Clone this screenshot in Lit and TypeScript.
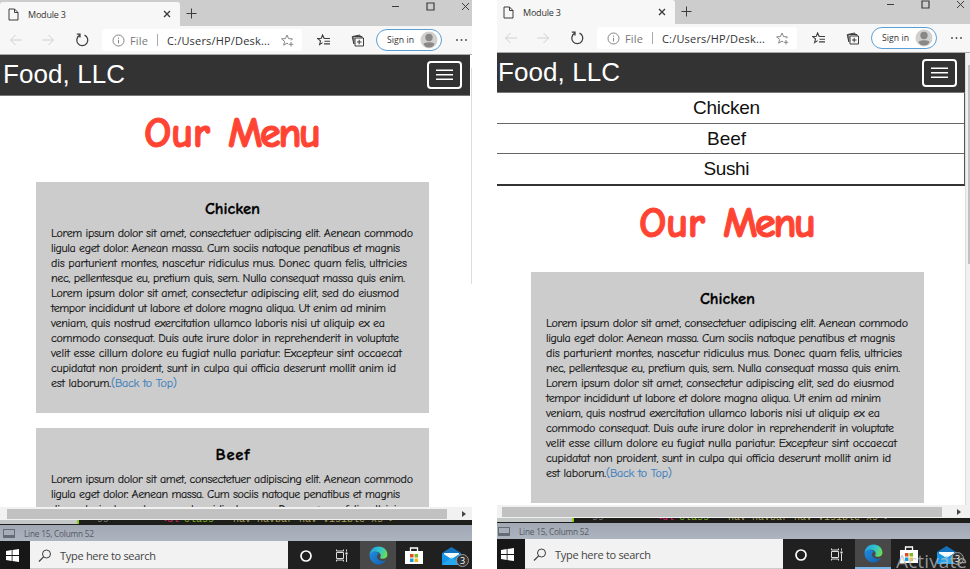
import { LitElement, html, css, svg, nothing } from "lit";
import { customElement, property, query, state } from "lit/decorators.js";
import { styleMap } from "lit/directives/style-map.js";

/** Text spread over a fixed number of pixels by letter-spacing. */
@customElement("fit-text")
class FitText extends LitElement {
  @property() text = "";
  @property({ type: Number }) w = 0;
  @state() private spacing = 0;
  @query("span") private inner!: HTMLElement;
  static styles = css`
    :host { display: block; white-space: nowrap; flex: none; }
    span { display: inline-block; white-space: pre; }
  `;
  firstUpdated() {
    const natural = this.inner.getBoundingClientRect().width;
    this.spacing = (this.w - natural) / Math.max(1, this.text.length - 1);
  }
  render() {
    return html`<div style=${styleMap({ width: this.w + "px" })}><span style=${styleMap({ letterSpacing: this.spacing + "px" })}>${this.text}</span></div>`;
  }
}

const fit = (text: string, w: number, cls = "") => html`<fit-text class=${cls} .text=${text} .w=${w}></fit-text>`;

const LINES: [string, number][] = [
  ["Lorem ipsum dolor sit amet, consectetuer adipiscing elit. Aenean commodo", 362],
  ["ligula eget dolor. Aenean massa. Cum sociis natoque penatibus et magnis", 349],
  ["dis parturient montes, nascetur ridiculus mus. Donec quam felis, ultricies", 356],
  ["nec, pellentesque eu, pretium quis, sem. Nulla consequat massa quis enim.", 354],
  ["Lorem ipsum dolor sit amet, consectetur adipiscing elit, sed do eiusmod", 348],
  ["tempor incididunt ut labore et dolore magna aliqua. Ut enim ad minim", 335],
  ["veniam, quis nostrud exercitation ullamco laboris nisi ut aliquip ex ea", 334],
  ["commodo consequat. Duis aute irure dolor in reprehenderit in voluptate", 348],
  ["velit esse cillum dolore eu fugiat nulla pariatur. Excepteur sint occaecat", 351],
  ["cupidatat non proident, sunt in culpa qui officia deserunt mollit anim id", 345],
];

const ic = (w: number, h: number, body: unknown, cls = "") =>
  html`<svg class="ic ${cls}" width=${w} height=${h} viewBox="0 0 ${w} ${h}">${body}</svg>`;

const icons = {
  page: ic(11, 13, svg`<path d="M1 1h5.5L10 4.5V12H1zM6.5 1v3.500H10"/>`),
  x: ic(8, 8, svg`<path d="M1 1l6 6M7 1l-6 6" stroke-width="1.400"/>`),
  plus: ic(11, 11, svg`<path d="M5.500 .5v10M.5 5.500h10"/>`),
  back: ic(14, 12, svg`<path d="M13 6H1.500M6.500 1l-5 5 5 5"/>`, "pale"),
  fwd: ic(14, 12, svg`<path d="M1 6h11.500M7.500 1l5 5-5 5"/>`, "pale"),
  reload: ic(14, 14, svg`<path d="M4.500 2.400A5.500 5.500 0 1 0 9.500 2.100M1.800 1.200H5v3.300" stroke-width="1.250"/>`),
  info: ic(13, 13, svg`<circle cx="6.500" cy="6.500" r="5.500"/><path d="M6.500 5.800v3.600M6.500 3.600v1.200"/>`, "grey"),
  star: ic(13, 13, svg`<path d="M10.200 6.400L11.400 4.900 7.600 4.600 6 1 4.400 4.600.6 4.900l3 2.500-.9 3.800L6 9.100l1.200.8M10 8v4.500M7.800 10.300h4.400"/>`, "grey"),
  fav: ic(14, 13, svg`<path d="M8 4.400L7 4.300 5.600 1 4.300 4.300.8 4.600l2.700 2.300-.9 3.700 3-2M7 4.500h6M7.500 7.200H13M7 9.900h6" stroke-width="1.100"/>`),
  coll: ic(14, 13, svg`<path d="M4 4h8.500v8H4zM8.200 5.800v4.500M6 8h4.500M2.800 9.800L1.200 2.600 8.800 1l.5 2.300M2.800 9.800V2.500H11V4"/>`),
  min: ic(9, 9, svg`<path d="M1 4.500h7"/>`),
  max: ic(9, 9, svg`<path d="M1 1h7v7H1z" stroke-width="1.200"/>`),
  close: ic(9, 9, svg`<path d="M1 1l7 7M8 1L1 8"/>`),
  burger: ic(17, 12, svg`<path d="M0 1.250h17M0 5.750h17M0 10.250h17" stroke="#fff" stroke-width="1.500"/>`),
  person: ic(18, 18, svg`<circle cx="9" cy="9" r="8.500" fill="#d2d0ce" stroke="none"/><circle cx="9" cy="6.500" r="3.700" fill="#8a8886" stroke="none"/><path d="M3.500 12.500Q9 10 14.500 12.500Q13.500 16.500 9 16.500T3.500 12.500z" fill="#8a8886" stroke="none"/>`),
  dots: ic(13, 4, svg`<g fill="#444" stroke="none"><circle cx="2" cy="2" r=".9"/><circle cx="6.500" cy="2" r=".9"/><circle cx="11" cy="2" r=".9"/></g>`),
  win: ic(13, 13, svg`<path fill="#fff" stroke="none" d="M0 1.900L5.700 1.100V6H0zM6.500 1L13 0v6H6.500zM0 6.900h5.700v5L0 11.100zM6.500 6.900H13V13l-6.500-.9z"/>`),
  search: ic(14, 13, svg`<circle cx="8.500" cy="5" r="4"/><path d="M5.600 7.900L1 12.500" stroke-width="1.200"/>`),
  cortana: ic(14, 14, svg`<circle cx="7" cy="7" r="5" stroke="#fff" stroke-width="1.700"/>`),
  task: ic(14, 13, svg`<path stroke="#ddd" d="M1.500 3.500h7v6h-7zM1.500 .5v1.500h7V.5M1.500 12.500V11h7v1.500M11.500 .5v2M11.500 6v7"/><path stroke="#fff" stroke-width="2" d="M10.500 4.500h2"/>`),
  edge: html`<svg width="19" height="19" viewBox="0 0 20 20">
    <defs>
      <linearGradient id="a" x1="0" y1=".2" x2="1" y2=".5"><stop offset="0" stop-color="#249ee0"/><stop offset=".55" stop-color="#2ec4cf"/><stop offset="1" stop-color="#6bdc55"/></linearGradient>
      <linearGradient id="b" x1="0" y1="0" x2="1" y2="1"><stop offset="0" stop-color="#1c8be0"/><stop offset="1" stop-color="#1660ad"/></linearGradient>
    </defs>
    <path fill="url(#b)" d="M.8 8.500C2 5.500 8 4.600 10.500 8.500 8 9 7.500 12.200 10 14.300c2.400 2 5.600 1.600 7.800.4C15.500 19.500 9 21 4.500 17.500 1 14.800.2 11.500.8 8.500z"/>
    <path fill="url(#a)" d="M.7 9.300C1 4 5 .6 10 .6c6 0 9.400 4.300 9.400 8.300 0 3-2.200 4.600-4.700 4.600-2 0-3.500-.8-3-1.600.8-1.200.9-2.600-.2-4C9 5 3.200 5 .7 9.300z"/>
  </svg>`,
  store: html`<svg width="18" height="19" viewBox="0 0 18 19"><path d="M5.500 5V2h7v3" fill="none" stroke="#fff" stroke-width="1.300"/><path fill="#fff" d="M0 5h18v13H0z"/><path fill="#e64a20" d="M5 8h3.500v3.500H5z"/><path fill="#7cb920" d="M9.500 8H13v3.500H9.500z"/><path fill="#149fe0" d="M5 12.500h3.500V16H5z"/><path fill="#f6b71b" d="M9.500 12.500H13V16H9.500z"/></svg>`,
  mail: html`<svg width="19" height="18" viewBox="0 0 19 18"><path fill="#1272bd" d="M0 6l9.500-6L19 6v3H0z"/><path fill="#f5fafd" d="M2 6h15v5l-7.500 4L2 10z"/><path fill="#1595e5" d="M0 6l9.500 6L19 6v12H0z"/><path fill="#35b4f4" d="M0 18L9.500 10 19 18z" opacity=".6"/></svg>`,
};

@customElement("browser-window")
class BrowserWindow extends LitElement {
  @property({ type: Boolean, reflect: true }) open = false;
  static styles = css`
    :host { display: flex; flex-direction: column; height: 569px; width: 472px; background: #fff; font-family: "Open Sans", "Segoe UI", sans-serif; color: #333; overflow: hidden; }
    :host([open]) { width: 475px; height: 571px; }
    * { box-sizing: border-box; }
    svg { display: block; flex: none; }
    .ic { fill: none; stroke: #3c3c3c; stroke-width: 1; }
    .pale { stroke: #d0d0d0; }
    .grey { stroke: #858585; }
    .tabs { height: 26px; flex: none; background: #cdcdcd; display: flex; align-items: flex-start; padding-top: 2px; }
    .tab { width: 180px; height: 24px; background: #f7f7f7; border-radius: 3px 3px 0 0; display: flex; align-items: center; padding: 0 9px 0 8px; font-size: 9px; }
    .tab fit-text { margin-left: 9px; flex: 1; }
    .tabs > .new { margin: 6px 0 0 6px; }
    .controls { display: flex; margin-left: auto; width: 81px; justify-content: space-between; padding-right: 2px; }
    :host([open]) .controls { margin-right: 3px; }
    .bar { height: 28px; flex: none; background: #f7f7f7; display: flex; align-items: center; padding-left: 9px; }
    .bar > .i2 { margin-left: 18px; }
    .bar > .i3 { margin-left: 20px; }
    .address { margin-left: 13px; width: 200px; height: 22px; background: #fff; border-radius: 3px; display: flex; align-items: center; padding-left: 10px; font-size: 11px; }
    .file { color: #777; margin-left: 5px; }
    .sep { width: 1px; height: 12px; background: #aaa; margin: 0 9px; }
    .address .ic:last-child { margin-left: 11px; }
    .gapfav { margin-left: 15px; }
    .gapcoll { margin-left: 20px; }
    .sign { width: 66px; height: 22px; border: 1.5px solid #5a9fd6; border-radius: 11px; margin-left: 11px; display: flex; align-items: center; padding-left: 10px; font-size: 8.7px; background: #fff; }
    .sign svg { margin-left: 6px; }
    .gapdots { margin-left: 13px; }
    .page { height: 453px; flex: none; display: flex; border-top: 1px solid #aaa; }
    .site { width: 470px; flex: none; overflow: hidden; }
    .track { flex: 1; padding: 13px 0 0 1px; background: #fff; }
    .thumb { height: 216px; background: #ddd; width: 1px; }
    :host([open]) .track { background: #f1f1f1; padding: 0 0 0 2px; border-left: 1px solid #ddd; }
    :host([open]) .thumb { width: 3px; height: 199px; margin-top: 12px; background: #c1c1c1; }
    .nav { height: 41px; background: #333; border-bottom: 1px solid #777; display: flex; align-items: center; justify-content: space-between; padding: 0 8px 0 3px; color: #fff; font: 26px/38px "Liberation Sans", Arial, sans-serif; }
    .nav > fit-text { margin-top: -2px; }
    :host([open]) .nav { height: 40px; }
    .burger { width: 35px; height: 28px; border: 2px solid #fff; border-radius: 4px; display: grid; place-items: center; }
    .menu { border-right: 1px solid #555; border-bottom: 2px solid #333; height: 93px; display: grid; grid-template-rows: 31px 30px 30px; }
    .menu div { border-bottom: 1px solid #666; display: flex; justify-content: center; padding-right: 6px; font: 19px/30px "Liberation Sans", Arial, sans-serif; color: #111; }
    .menu div:last-child { border-bottom: 0; }
    .body { padding: 0 41px 0 36px; font-family: "Comic Sans MS", "Comic Neue", sans-serif; }
    h1 { margin: 0; height: 86px; padding-top: 9px; display: flex; justify-content: center; gap: 18px; font-size: 43px; line-height: 56px; font-weight: 700; color: #ff4433; -webkit-text-stroke: 1px #ff4433; }
    .card { height: 231px; background: #ccc; margin-bottom: 15px; padding: 17px 15px 0; font-size: 12px; line-height: 15px; color: #111; -webkit-text-stroke: 0.15px currentColor; }
    h2 { margin: 0 0 7px; font-size: 16.5px; line-height: 20px; display: flex; justify-content: center; color: #000; -webkit-text-stroke: 0.3px #000; }
    .last { display: flex; }
    .link { color: #3c7fbd; }
    .hscroll { height: 13px; flex: none; background: #f1f1f1; display: flex; align-items: center; padding-left: 7px; }
    .hthumb { width: 440px; height: 10px; background: #c1c1c1; }
    .arrow { border: 3px solid transparent; border-left: 4px solid #444; border-right: 0; margin-left: 15px; }
    .code { height: 5px; flex: none; display: flex; background: #1d1e19; font: 10px/10px "Liberation Mono", monospace; overflow: hidden; }
    .panel { width: 79px; height: 4px; background: #c3c7c7; border-right: 2px solid #8ccc11; flex: none; }
    .code span { margin-top: -5px; white-space: pre; }
    .num { color: #777; margin-left: 12px; width: 70px; }
    .tag { color: #d0205c; width: 23px; }
    .attr { color: #80b020; width: 43px; }
    .str { color: #a59d55; }
    .status { height: 16px; flex: none; background: linear-gradient(#a2a8b3, #acb4c0); display: flex; align-items: center; padding-left: 3px; gap: 9px; font-size: 8.3px; color: #555b64; }
    .status i { width: 12px; height: 9px; border: 1px solid #666c75; border-bottom-width: 3px; }
    .task { flex: 1; background: #202020; display: flex; }
    .start { width: 30px; background: #171717; display: grid; place-items: center; padding-right: 6px; }
    .search { width: 258px; background: #f2f2f2; display: flex; align-items: center; padding: 2px 0 0 8px; gap: 8px; font-size: 11px; color: #444; border-bottom: 1px solid #ccc; }
    .slot { width: 36px; display: grid; place-items: center; padding-top: 1px; }
    .slot.on { background: #484848; }
    :host([open]) .on { border-bottom: 2px solid #76b9ed; }
    .mail { position: relative; width: 38px; }
    .badge { position: absolute; left: 24px; top: 13px; width: 13px; height: 13px; border-radius: 50%; border: 1px solid #999; background: #333; color: #fff; font-size: 9px; line-height: 11px; text-align: center; }
  `;
  render() {
    return html`
      <div class="tabs">
        <div class="tab">${icons.page}${fit("Module 3", 38)}${icons.x}</div>
        <div class="new">${icons.plus}</div>
        <div class="controls">${icons.min}${icons.max}${icons.close}</div>
      </div>
      <div class="bar">
        ${icons.back}<div class="i2">${icons.fwd}</div><div class="i3">${icons.reload}</div>
        <div class="address">${icons.info}${fit("File", 18, "file")}<div class="sep"></div>${fit("C:/Users/HP/Desk...", 103)}${icons.star}</div>
        <div class="gapfav">${icons.fav}</div><div class="gapcoll">${icons.coll}</div>
        <div class="sign">${fit("Sign in", 27)}${icons.person}</div>
        <div class="gapdots">${icons.dots}</div>
      </div>
      <div class="page">
        <div class="site">
          <div class="nav">${fit("Food, LLC", 122)}<div class="burger">${icons.burger}</div></div>
          ${this.open ? html`<div class="menu"><div>${fit("Chicken", 67)}</div><div>${fit("Beef", 39)}</div><div>${fit("Sushi", 46)}</div></div>` : nothing}
          <div class="body">
            <h1>${fit("Our", 66)}${fit("Menu", 93)}</h1>
            ${this.card("Chicken", 55)}${this.card("Beef", 34)}
          </div>
        </div>
        <div class="track"><div class="thumb"></div></div>
      </div>
      <div class="hscroll"><div class="hthumb"></div><div class="arrow"></div></div>
      <div class="code"><div class="panel"></div><span class="num"> 99</span><span class="tag">&lt;ul</span><span class="attr">class=</span><span class="str">"nav navbar-nav visible-xs"&gt;</span></div>
      <div class="status"><i></i>${fit("Line 15, Column 52", 70)}</div>
      <div class="task">
        <div class="start">${icons.win}</div>
        <div class="search">${icons.search}${fit("Type here to search", 96)}</div>
        <div class="slot">${icons.cortana}</div><div class="slot">${icons.task}</div>
        <div class="slot on">${icons.edge}</div><div class="slot">${icons.store}</div>
        <div class="slot mail">${icons.mail}<div class="badge">3</div></div>
      </div>
    `;
  }
  private card(title: string, w: number) {
    return html`<div class="card"><h2>${fit(title, w)}</h2>${LINES.map(([t, n]) => fit(t, n))}
      <div class="last">${fit("est laborum.", 60)}${fit("(Back to Top)", 66, "link")}</div></div>`;
  }
}

@customElement("app-root")
class AppRoot extends LitElement {
  static styles = css`
    :host { display: flex; width: 970px; height: 569px; background: #fff; overflow: hidden; position: relative; }
    .right { margin-left: 25px; width: 473px; overflow: hidden; }
    .right browser-window { margin: -2px 0 0 -2px; }
    .mark { position: absolute; left: 896px; top: 549px; color: rgba(190, 190, 190, 0.75); font: 19px/24px "Open Sans", sans-serif; }
  `;
  render() {
    return html`<browser-window></browser-window>
      <div class="right"><browser-window open></browser-window></div>
      <div class="mark">${fit("Activate", 71)}</div>`;
  }
}
